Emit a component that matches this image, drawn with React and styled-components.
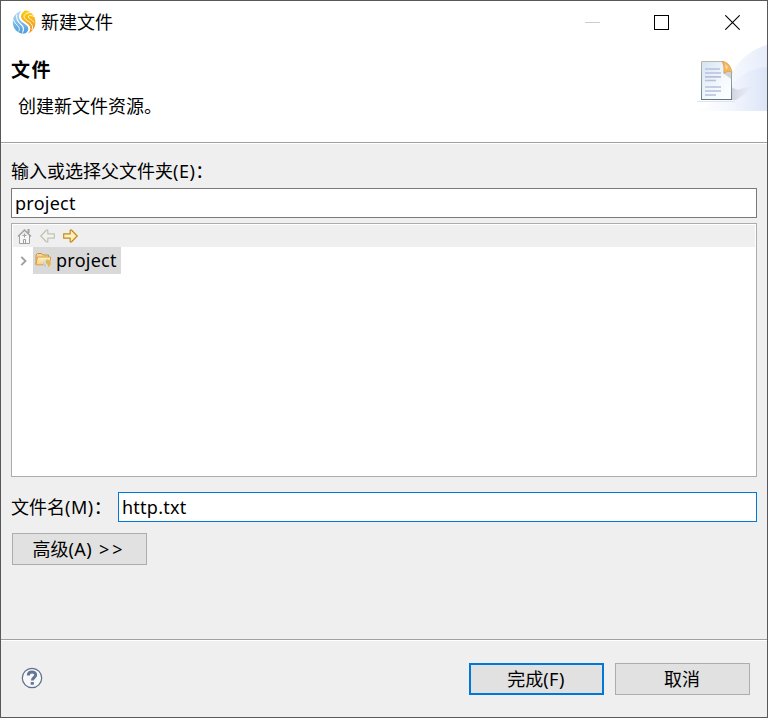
import { useState } from "react";
import styled, { createGlobalStyle } from "styled-components";

function App() {
    const [folder, setFolder] = useState("project");
    const [fileName, setFileName] = useState("http.txt");

    return (
        <>
            <GlobalStyle />
            <Dialog>
                <TitleBar>
                    <AppLogo />
                    <Title>新建文件</Title>
                    <WindowButtons />
                </TitleBar>
                <Header>
                    <div>
                        <Heading>文件</Heading>
                        <Description>创建新文件资源。</Description>
                    </div>
                    <Banner />
                </Header>
                <Content>
                    <Label>输入或选择父文件夹<Key>(E)</Key>：</Label>
                    <Input value={folder} onChange={(e) => setFolder(e.target.value)} />
                    <Tree>
                        <TreeToolbar>
                            <HomeIcon />
                            <ArrowIcon fill="#f1f3ea" stroke="#bfc1b9" flip />
                            <ArrowIcon fill="#fff0bd" stroke="#c28a1c" />
                        </TreeToolbar>
                        <TreeRow>
                            <Chevron />
                            <TreeItem>
                                <FolderIcon />
                                <span>project</span>
                            </TreeItem>
                        </TreeRow>
                    </Tree>
                    <FileRow>
                        <FileLabel>文件名<Key>(M)</Key>：</FileLabel>
                        <Input $focused value={fileName} onChange={(e) => setFileName(e.target.value)} />
                    </FileRow>
                    <AdvancedButton>高级<Key>(A)</Key> <Angles>&gt;&gt;</Angles></AdvancedButton>
                </Content>
                <Footer>
                    <HelpIcon />
                    <Actions>
                        <Button $primary>完成<Key>(F)</Key></Button>
                        <Button>取消</Button>
                    </Actions>
                </Footer>
            </Dialog>
        </>
    );
}

function AppLogo() {
    return (
        <svg width="24" height="24" viewBox="0 0 24 24">
            <defs>
                <linearGradient id="logoBlue" x1="0" y1="0" x2="0" y2="1">
                    <stop offset="0" stopColor="#b5e0f8" />
                    <stop offset="1" stopColor="#4a9bd9" />
                </linearGradient>
                <linearGradient id="logoGold" x1="0" y1="0" x2="0" y2="1">
                    <stop offset="0" stopColor="#ffcf08" />
                    <stop offset="1" stopColor="#f0892a" />
                </linearGradient>
            </defs>
            <path d="M10 .8C4.500 1.800 .8 6.500 .8 12 .8 18.500 5 22.800 10.500 23.600c4 .2 6.300-2.300 5.900-5.600C16 14 7.400 12.500 7.200 7.600 7.100 4.300 8.300 2.200 10 .8z" fill="url(#logoBlue)" />
            <path d="M13 .5c6 .3 10.300 5.200 10.400 11.500 .1 5.800-3.300 9.900-7.600 11.300 1.600-1.500 2.700-3.300 2.400-5.600C17.700 13.300 9.300 11.600 9 7 8.900 4 10.500 1.500 13 .5z" fill="url(#logoGold)" />
            <path d="M19.500 2.500C14.500 2.500 11.500 4.800 12.200 7.300c1 3.200 7.600 4.800 8.300 9.200.2 1.400-.1 2.500-.6 3.500" fill="none" stroke="#fff" strokeWidth="1" />
            <path d="M22 6.500c-3.500-1.800-6.200-1-5.600.7.700 1.700 3.800 2.500 5.800 5.300" fill="none" stroke="#fff" strokeWidth=".8" />
            <path d="M4.800 4.500C4 9 5 11.200 8.500 14c2.900 2.400 4.200 4.800 2 8.600" fill="none" stroke="#fff" strokeWidth="1.100" />
            <path d="M1.500 9.500c.5 4 4.300 5.300 5.500 8 .6 1.400.3 2.800-.3 4" fill="none" stroke="#fff" strokeWidth=".9" />
            <path d="M11.500.8C7.500 3 7 6.600 8.800 9.400c2.300 3.300 8.400 4.700 8.600 9.300 0 1.900-1 3.400-2.300 4.500" fill="none" stroke="#fff" strokeWidth="1.600" />
        </svg>
    );
}

function WindowButtons() {
    return (
        <WindowControls>
            <svg width="15" height="15"><path d="M0 7.500h15" stroke="#ccc" /></svg>
            <svg width="15" height="15"><rect x=".5" y=".5" width="14" height="14" fill="none" stroke="#000" /></svg>
            <svg width="15" height="15"><path d="M.3.300l14.400 14.400M14.700.300L.300 14.700" stroke="#000" strokeWidth="1.100" /></svg>
        </WindowControls>
    );
}

function Banner() {
    return (
        <svg width="75" height="66" viewBox="0 0 75 66">
            <defs>
                <linearGradient id="swoosh" x1="0" y1="0" x2="1" y2="0">
                    <stop offset="0" stopColor="#fff" />
                    <stop offset=".5" stopColor="#f7f9fe" />
                    <stop offset="1" stopColor="#e6edfa" />
                </linearGradient>
                <linearGradient id="swooshFront" x1="0" y1="0" x2="1" y2="0">
                    <stop offset="0" stopColor="#fff" stopOpacity="0" />
                    <stop offset="1" stopColor="#dce5f8" />
                </linearGradient>
                <linearGradient id="page" x1="0" y1="0" x2="1" y2="1">
                    <stop offset="0" stopColor="#d5e3f3" />
                    <stop offset=".6" stopColor="#f5f9fd" />
                    <stop offset="1" stopColor="#fff" />
                </linearGradient>
                <linearGradient id="pageEdge" x1="0" y1="0" x2="0" y2="1">
                    <stop offset="0" stopColor="#b6b7a6" />
                    <stop offset="1" stopColor="#668394" />
                </linearGradient>
                <linearGradient id="pageShadow" x1="0" y1="0" x2="1" y2="0">
                    <stop offset="0" stopColor="#b9b6c6" />
                    <stop offset="1" stopColor="#dce3f3" stopOpacity="0" />
                </linearGradient>
            </defs>
            <path d="M0 66C20 63 28 48 38 30 48 13 60 4 75 0v66z" fill="url(#swoosh)" />
            <path d="M6 66C24 62 32 47 42 37c9-8 19-14 33-15v44z" fill="url(#swooshFront)" />
            <path d="M39 42v13h5c7-4 12-9 19-15-8 2-13 3-17 5z" fill="url(#pageShadow)" opacity=".6" />
            <path d="M5 56.500h38" stroke="#e6e2ea" />
            <path d="M9.500 16.500h22l8 10v28h-30z" fill="url(#page)" stroke="url(#pageEdge)" />
            <path d="M9 54.500h31" stroke="#5d7b85" />
            <path d="M31 28l1-4 7 3v7z" fill="#9ba6ae" opacity=".45" />
            <path d="M30 16.500c6 0 9 5 10 11-3-2-5-1-8 1 0-5 0-9-2-12z" fill="#f4b45d" stroke="#d9933d" strokeWidth=".6" />
            <path d="M33 19l3 3-2 3z" fill="#ffdf9e" />
            <g stroke="#b6c0dd" strokeWidth="1.700">
                <path d="M13 24h15M13 28h16M13 31.800h16M13 35.500h11M13 42h16M13 46h16M13 50h11" />
            </g>
        </svg>
    );
}

function HomeIcon() {
    return (
        <svg width="15" height="16" viewBox="0 0 15 16" fill="none" stroke="#a0a0a0">
            <path d="M2.500 7v8.500h10V7" fill="#f6f6f6" />
            <path d="M1 8.500l6.500-6.500L14 8.500" strokeWidth="1.500" />
            <path d="M11.500 5V1" strokeWidth="2" />
            <path d="M6.500 15.500v-4h2v4M5.500 7.500h4M7.500 5.500v4" />
        </svg>
    );
}

function ArrowIcon({ fill, stroke, flip }) {
    return (
        <svg width="15" height="14" viewBox="0 0 15 14">
            <path
                d="M.7 4.800h6.500V1h1.200l5.800 6-5.800 6H7.200V9.200H.7z"
                fill={fill}
                stroke={stroke}
                strokeWidth="1.200"
                strokeLinejoin="round"
                transform={flip ? "translate(15 0) scale(-1 1)" : undefined}
            />
        </svg>
    );
}

function Chevron() {
    return (
        <svg width="7" height="10" viewBox="0 0 7 10">
            <path d="M1.300.8l4.200 4.200-4.200 4.200" fill="none" stroke="#a0a0a0" strokeWidth="1.900" />
        </svg>
    );
}

function FolderIcon() {
    return (
        <svg width="17" height="16" viewBox="0 0 17 16">
            <defs>
                <linearGradient id="folder" x1="0" y1="0" x2="0" y2="1">
                    <stop offset="0" stopColor="#fff1c2" />
                    <stop offset="1" stopColor="#f9d07b" />
                </linearGradient>
            </defs>
            <path d="M1 12.500V3l1.500-1.500h4L8 3h5.500v3" fill="#f7d58c" stroke="#c9913e" />
            <path d="M1 12.800L2.500 5h13v6.500l-1.500 1.300z" fill="url(#folder)" stroke="#d5a04d" />
            <circle cx="12.200" cy="11.300" r="4" fill="#dedede" />
            <path d="M11 7.800c-2.300 1-2.700 2.400-1.800 3.500 1 1 2.500 1.800 1.900 3.600-1.900-.5-3-2-2.900-3.900.1-1.400 1.200-2.700 2.800-3.200z" fill="#b5c8d9" />
            <path d="M12.500 7.500c2.200.3 3.500 2 3.400 4-.2 1.900-1.500 3.300-3.200 3.600 1.500-2.700-2.200-3.200-2.200-5.300 0-1.100.8-1.900 2-2.300z" fill="#e6b64e" />
        </svg>
    );
}

function HelpIcon() {
    return (
        <svg width="22" height="22" viewBox="0 0 22 22">
            <circle cx="11" cy="11" r="9.700" fill="#f8f8f9" stroke="#5c6f8e" strokeWidth="1.200" />
            <path d="M7.300 8.500C7.300 3.800 14.800 4 14.700 8c0 2.500-3.400 2.500-3.400 5.500" fill="none" stroke="#647796" strokeWidth="3" />
            <rect x="9.700" y="15" width="3.200" height="2.800" rx=".6" fill="#647796" />
        </svg>
    );
}

const GlobalStyle = createGlobalStyle`
    * {
        box-sizing: border-box;
    }

    body {
        margin: 0;
        font-family: "Noto Sans", "Noto Sans CJK SC", sans-serif;
        font-size: 18px;
        color: #000;
    }

    svg {
        display: block;
        flex-shrink: 0;
    }
`;

const Dialog = styled.div`
    width: 768px;
    height: 718px;

    display: flex;
    flex-direction: column;

    background: #efefef;
    border: 1px solid #58585a;
`;

const TitleBar = styled.div`
    height: 44px;
    padding: 0 27px 2px 11px;

    display: flex;
    align-items: center;
    gap: 5px;

    background: white;
`;

const Title = styled.span`
    line-height: 24px;
`;

const WindowControls = styled.div`
    margin-left: auto;

    display: flex;
    gap: 56px;

    & > :first-child {
        margin-right: -2px;
    }
`;

const Header = styled.header`
    height: 99px;

    display: flex;
    justify-content: space-between;

    background: white;
    border-bottom: 1px solid white;
    box-shadow: inset 0 -1px 0 #a0a0a0;
`;

const Heading = styled.h1`
    margin: 9px 0 0 10px;

    font-family: "Noto Sans CJK SC", sans-serif;
    font-size: 19px;
    font-weight: 700;
    line-height: 30px;
    letter-spacing: 1.5px;
`;

const Description = styled.p`
    margin: 9px 0 0 17px;

    line-height: 26px;
`;

const Content = styled.main`
    flex: 1;
    padding: 14px 10px 0;
`;

const Label = styled.label`
    display: block;
    height: 30px;

    line-height: 26px;
    white-space: nowrap;
`;

const FileLabel = styled(Label)`
    line-height: 30px;
`;

const Key = styled.span`
    letter-spacing: 0.5px;
`;

const Input = styled.input`
    display: block;
    width: 100%;
    height: 30px;
    padding: 0 3px;

    background: white;
    border: 1px solid ${({ $focused }) => ($focused ? "#0078d7" : "#7a7a7a")};
    border-radius: 0;
    outline: none;
    font: inherit;
    letter-spacing: 0.25px;
`;

const Tree = styled.div`
    height: 254px;
    margin-top: 5px;
    padding: 1px;

    background: white;
    border: 1px solid #acacac;
`;

const TreeToolbar = styled.div`
    height: 22px;
    padding-left: 4px;

    display: flex;
    align-items: center;
    gap: 8px;

    background: #efefef;
`;

const TreeRow = styled.div`
    height: 27px;
    padding-left: 7px;

    display: flex;
    align-items: center;
    gap: 6px;
`;

const TreeItem = styled.div`
    width: 88px;
    height: 27px;
    padding: 0 0 1px 2px;

    display: flex;
    align-items: center;
    gap: 4px;

    background: #d9d9d9;
    line-height: 26px;
    letter-spacing: 0.25px;
`;

const FileRow = styled.div`
    margin-top: 15px;

    display: grid;
    grid-template-columns: 107px 1fr;
    align-items: center;
`;

const Button = styled.button`
    width: 135px;
    height: 32px;
    padding: 0 1px 0 0;

    background: #e1e1e1;
    border: ${({ $primary }) => ($primary ? "2px solid #0078d7" : "1px solid #adadad")};
    border-radius: 0;
    color: #000;
    font: inherit;
    line-height: 26px;
`;

const AdvancedButton = styled(Button)`
    display: block;
    margin: 11px 0 0 1px;
`;

const Angles = styled.span`
    margin-left: 2px;

    letter-spacing: 3px;
`;

const Footer = styled.footer`
    height: 78px;
    padding: 0 17px 0 20px;

    display: flex;
    align-items: center;
    justify-content: space-between;

    border-top: 1px solid #a0a0a0;
    box-shadow: inset 0 1px 0 white;

    & > svg {
        margin-bottom: 2px;
    }
`;

const Actions = styled.div`
    display: flex;
    gap: 11px;
`;

export default App;
